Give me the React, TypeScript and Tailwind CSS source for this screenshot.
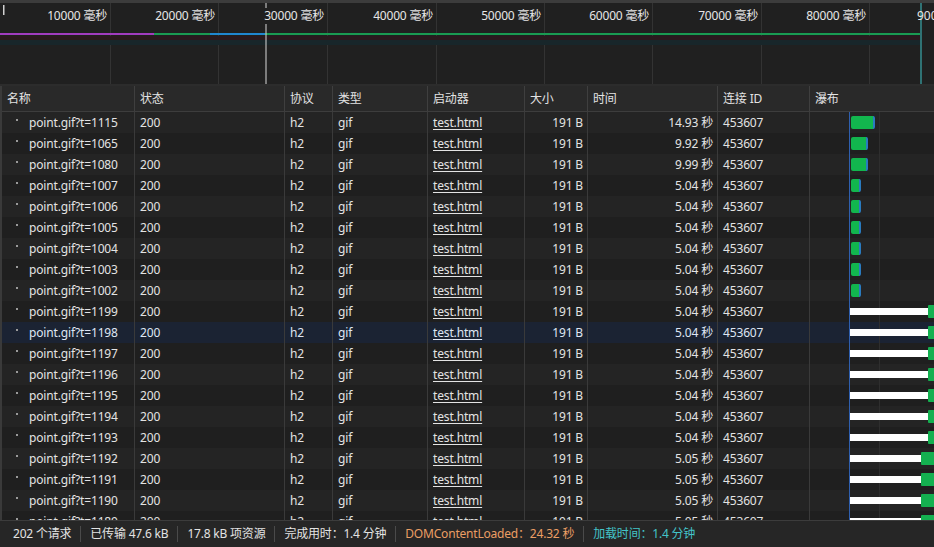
import React from 'react';

const FONT = { fontFamily: '"Noto Sans", "Noto Sans CJK SC", sans-serif' };

const GRID = 'grid grid-cols-[133px_150px_48px_95px_97px_63px_130px_92px_1fr]';

type Row = { id: number; time: string; wf: 'long' | 'mid' | 'short' | 'wait' | 'wait2' };

const ROWS: Row[] = [
  { id: 1115, time: '14.93 秒', wf: 'long' },
  { id: 1065, time: '9.92 秒', wf: 'mid' },
  { id: 1080, time: '9.99 秒', wf: 'mid' },
  { id: 1007, time: '5.04 秒', wf: 'short' },
  { id: 1006, time: '5.04 秒', wf: 'short' },
  { id: 1005, time: '5.04 秒', wf: 'short' },
  { id: 1004, time: '5.04 秒', wf: 'short' },
  { id: 1003, time: '5.04 秒', wf: 'short' },
  { id: 1002, time: '5.04 秒', wf: 'short' },
  { id: 1199, time: '5.04 秒', wf: 'wait' },
  { id: 1198, time: '5.04 秒', wf: 'wait' },
  { id: 1197, time: '5.04 秒', wf: 'wait' },
  { id: 1196, time: '5.04 秒', wf: 'wait' },
  { id: 1195, time: '5.04 秒', wf: 'wait' },
  { id: 1194, time: '5.04 秒', wf: 'wait' },
  { id: 1193, time: '5.04 秒', wf: 'wait' },
  { id: 1192, time: '5.05 秒', wf: 'wait2' },
  { id: 1191, time: '5.05 秒', wf: 'wait2' },
  { id: 1190, time: '5.05 秒', wf: 'wait2' },
  { id: 1189, time: '5.05 秒', wf: 'wait2' },
];

// overview tick positions (px)
const TICKS = [110, 218, 327, 436, 544, 652, 761, 869];
const LABELS = ['10000 毫秒', '20000 毫秒', '30000 毫秒', '40000 毫秒', '50000 毫秒', '60000 毫秒', '70000 毫秒', '80000 毫秒'];

const Overview = () => (
  <div className="relative h-[84px] bg-[#202020] border-t-[3px] border-[#3c3c3c] overflow-hidden">
    <svg className="absolute inset-0" width="934" height="81">
      {TICKS.map(x => (
        <line key={x} x1={x + 0.5} y1={0} x2={x + 0.5} y2={81} stroke="#333333" />
      ))}
      <rect x={3} y={2} width={1.5} height={10} fill="#d0d0d0" />
      <rect x={0} y={33} width={920} height={4} fill="#2a1a1e" />
      <rect x={0} y={37} width={920} height={5} fill="#18262a" />
      <rect x={0} y={30} width={154} height={2} fill="#a23cc0" />
      <rect x={154} y={30} width={56} height={2} fill="#1a9a52" />
      <rect x={210} y={30} width={55} height={2} fill="#1f87d0" />
      <rect x={265} y={30} width={655} height={2} fill="#1a9a52" />
      <rect x={265.5} y={0} width={1} height={81} fill="#d8d8d8" />
      <rect x={920.5} y={0} width={1} height={81} fill="#3fc3c8" />
    </svg>
    {LABELS.map((l, i) => (
      <span
        key={l}
        className="absolute top-[5px] text-[12px] leading-[16px] tracking-[-0.2px] text-[#e6e6e6] bg-[#202020] pr-[2px] whitespace-nowrap"
        style={{ right: 934 - TICKS[i] + 1 }}
      >
        {l}
      </span>
    ))}
    <span className="absolute top-[5px] left-[917px] text-[12px] leading-[16px] text-[#e6e6e6] whitespace-nowrap">900</span>
  </div>
);

const Waterfall = ({ wf }: { wf: Row['wf'] }) => {
  if (wf === 'wait' || wf === 'wait2') {
    const end = wf === 'wait' ? 928 : 921;
    return (
      <>
        <div className="absolute top-[7px] h-[7px] bg-white" style={{ left: 850 - 810, width: end - 850 }} />
        <div className="absolute top-[4px] h-[13px] bg-[#14b050] rounded-l-[1px]" style={{ left: end - 810, width: 20 }} />
      </>
    );
  }
  const w = wf === 'long' ? 24 : wf === 'mid' ? 17 : 10;
  return (
    <div
      className="absolute top-[4px] h-[13px] bg-[#12b64e] rounded-[2px] border-r-[2px] border-[#2a7bc0]"
      style={{ left: 851 - 810, width: w }}
    />
  );
};

const Sep = () => <span className="w-[1px] h-[16px] bg-[#4a4a4a] mx-[9px]" />;

export default function App() {
  return (
    <div className="w-[934px] h-[547px] bg-[#202020] text-[#e3e3e3] overflow-hidden relative text-[12px]" style={FONT}>
      <Overview />
      <div className="h-[2px] bg-[#2c2c2c]" />
      <div className="h-[434px] overflow-hidden border-l-2 border-[#3a3a3a] tracking-[-0.15px]">
        <div className={`${GRID} h-[26px] bg-[#292929] border-b border-[#3d3d3d] items-center`}>
          {['名称', '状态', '协议', '类型', '启动器', '大小', '时间', '连接 ID', '瀑布'].map(h => (
            <div key={h} className="h-full flex items-center pl-[5px] border-r border-[#3f3f3f] last:border-r-0">
              {h}
            </div>
          ))}
        </div>
        <div className="relative">
          {/* waterfall: load-start marker and grid line (offsets inside the 2px left border) */}
          <div className="absolute top-0 bottom-0 left-[847px] w-[1px] bg-[#2f5fae] z-10" />
          <div className="absolute top-0 bottom-0 left-[877px] w-[1px] bg-[#2e2e2e]" />
          {ROWS.map((r, i) => {
            const sel = r.id === 1198;
            const bg = sel ? 'bg-[#1b2333]' : i % 2 === 0 ? 'bg-[#242424]' : 'bg-[#1f1f1f]';
            return (
              <div key={r.id} className={`${GRID} h-[21px] leading-[21px] ${bg} ${sel ? 'text-[#dfe6f3]' : ''}`}>
                <div className="flex items-center border-r border-[#3a3a3a] whitespace-nowrap">
                  <span className="w-[2px] h-[2px] bg-[#9a9a9a] ml-[14px] mr-[11px] -mt-[5px]" />
                  point.gif?t={r.id}
                </div>
                <div className="pl-[5px] border-r border-[#3a3a3a]">200</div>
                <div className="pl-[5px] border-r border-[#3a3a3a]">h2</div>
                <div className="pl-[5px] border-r border-[#3a3a3a]">gif</div>
                <div className="pl-[5px] border-r border-[#3a3a3a]">
                  <span className="underline underline-offset-2">test.html</span>
                </div>
                <div className="pr-[4px] text-right border-r border-[#3a3a3a]">191 B</div>
                <div className="pr-[4px] text-right border-r border-[#3a3a3a]">{r.time}</div>
                <div className="pl-[5px] border-r border-[#3a3a3a]">453607</div>
                <div className="relative">
                  <Waterfall wf={r.wf} />
                </div>
              </div>
            );
          })}
        </div>
      </div>
      <div className="absolute left-0 right-0 bottom-0 h-[27px] bg-[#262626] border-t border-[#3c3c3c] flex items-center pl-[13px] whitespace-nowrap tracking-[-0.2px]">
        <span>202 个请求</span>
        <Sep />
        <span>已传输 47.6 kB</span>
        <Sep />
        <span>17.8 kB 项资源</span>
        <Sep />
        <span>完成用时：1.4 分钟</span>
        <Sep />
        <span className="text-[#eb9e64]">DOMContentLoaded：24.32 秒</span>
        <Sep />
        <span className="text-[#43c4c9]">加载时间：1.4 分钟</span>
      </div>
    </div>
  );
}
